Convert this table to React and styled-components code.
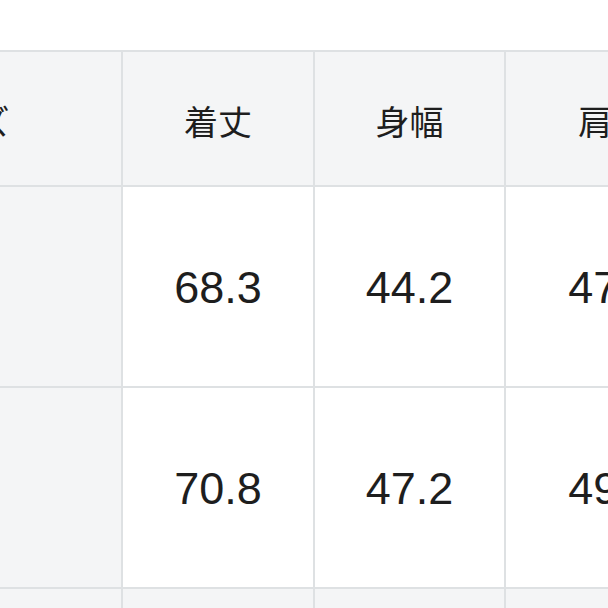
import styled, { createGlobalStyle } from "styled-components";

const GlobalStyle = createGlobalStyle`
  html, body {
    margin: 0;
    padding: 0;
    background: #ffffff;
  }
  body {
    font-family: "Liberation Sans", "Noto Sans CJK JP", sans-serif;
    color: #1e1e1e;
    overflow: hidden;
  }
`;

const columns = ["サイズ", "着丈", "身幅", "肩幅"];

const rows = [
  { size: "S", values: ["68.3", "44.2", "47.0"] },
  { size: "M", values: ["70.8", "47.2", "49.0"] },
  { size: "L", values: ["73.3", "50.2", "51.0"] },
];

export default function App() {
  return (
    <>
      <GlobalStyle />
      <Page>
        <Table>
          {columns.map((label) => (
            <HeadCell key={label}>{label}</HeadCell>
          ))}
          {rows.map((row, i) => (
            <Row key={row.size} $shade={i === 2}>
              <LabelCell>{row.size}</LabelCell>
              {row.values.map((v, j) => (
                <ValueCell key={j}>{v}</ValueCell>
              ))}
            </Row>
          ))}
        </Table>
      </Page>
    </>
  );
}

const Page = styled.div`
  width: 608px;
  height: 608px;
  padding-top: 50px;
  box-sizing: border-box;
  overflow: hidden;
`;

const Table = styled.div`
  display: grid;
  grid-template-columns: 324px 190px 189px 212px;
  grid-template-rows: 133px 199px 199px 199px;
  gap: 2px;
  padding: 2px 0;
  margin-left: -203px;
  width: max-content;
  background: #dee1e3;
`;

const Row = styled.div`
  display: contents;
  & > div {
    background: ${(p) => (p.$shade ? "#f4f5f6" : "#ffffff")};
  }
  & > div:first-child {
    background: #f4f5f6;
  }
`;

const HeadCell = styled.div`
  display: flex;
  align-items: center;
  justify-content: center;
  background: #f4f5f6;
  font-family: "Noto Sans CJK JP", sans-serif;
  font-size: 34px;
  font-weight: 400;
  padding-top: 4px;
  box-sizing: border-box;
`;

const LabelCell = styled.div`
  display: flex;
  align-items: center;
  justify-content: center;
  font-size: 34px;
`;

const ValueCell = styled.div`
  display: flex;
  align-items: center;
  justify-content: center;
  font-family: "Liberation Sans", Arial, sans-serif;
  font-size: 45px;
  padding-top: 2px;
  box-sizing: border-box;
`;
